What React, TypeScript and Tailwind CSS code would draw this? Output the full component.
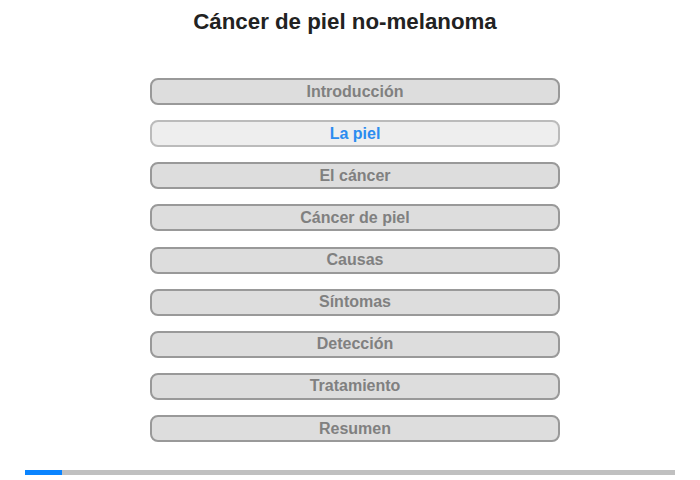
import React from 'react';

const sections = [
  'Introducción',
  'La piel',
  'El cáncer',
  'Cáncer de piel',
  'Causas',
  'Síntomas',
  'Detección',
  'Tratamiento',
  'Resumen',
];

const App: React.FC = () => {
  const active = 1;
  return (
    <div className="w-[700px] h-[480px] bg-white flex flex-col" style={{ fontFamily: '"Liberation Sans", Arial, sans-serif' }}>
      <h1 className="text-center text-[22.3px] leading-[26px] font-bold text-[#222222] pt-[9px] ml-[-10px]">
        Cáncer de piel no-melanoma
      </h1>
      <div className="flex flex-col gap-[15.125px] ml-[150px] mt-[43px] w-[410px]">
        {sections.map((s, i) => (
          <button
            key={s}
            className={
              i === active
                ? 'h-[27px] rounded-[8px] border-2 border-[#bbbbbb] bg-[#eeeeee] text-[#2b8cf0] text-[16px] font-bold leading-none'
                : 'h-[27px] rounded-[8px] border-2 border-[#999999] bg-[#dddddd] text-[#808080] text-[16px] font-bold leading-none'
            }
          >
            {s}
          </button>
        ))}
      </div>
      <div className="mt-auto mb-[5px] mx-[25px] h-[5px] bg-[#c0c0c0] flex">
        <div className="w-[37px] h-full bg-[#0a84ff]" />
      </div>
    </div>
  );
};

export default App;
